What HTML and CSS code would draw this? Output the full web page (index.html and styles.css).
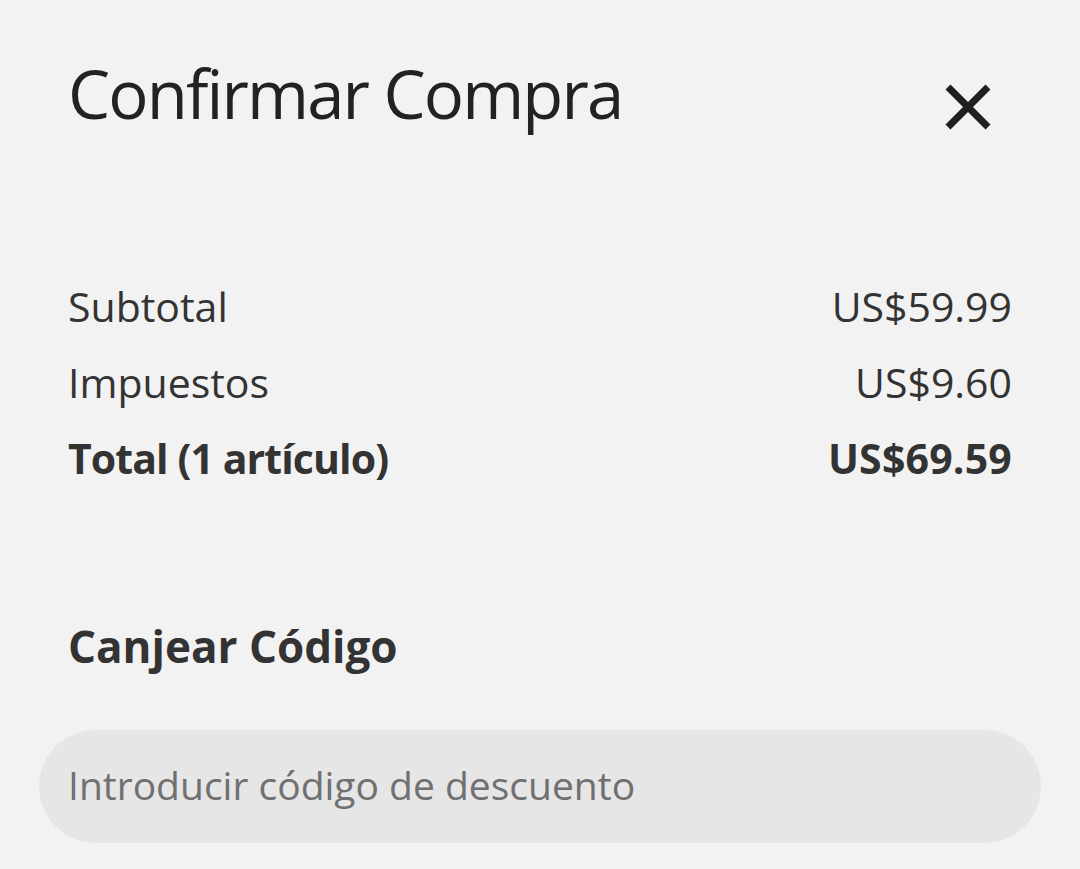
FILE: index.html
```html
<!DOCTYPE html>
<html lang="es">
<head>
<meta charset="utf-8">
<link rel="stylesheet" href="styles.css">
</head>
<body>
<div class="sheet">
  <header class="head">
    <h1 class="title">Confirmar Compra</h1>
    <button class="close" aria-label="Cerrar">
      <svg width="46" height="46" viewBox="0 0 46 46"><path d="M3 3 L43 43 M43 3 L3 43" stroke="#1f1f1f" stroke-width="7" fill="none"/></svg>
    </button>
  </header>
  <section class="summary">
    <div class="row"><span>Subtotal</span><span>US$59.99</span></div>
    <div class="row"><span>Impuestos</span><span>US$9.60</span></div>
    <div class="row total"><span class="label">Total (1 artículo)</span><span class="amount">US$69.59</span></div>
  </section>
  <section class="redeem">
    <h2 class="redeem-title">Canjear Código</h2>
    <div class="field"><span class="placeholder">Introducir código de descuento</span></div>
  </section>
</div>
</body>
</html>
```
FILE: styles.css
```css
html, body { margin: 0; padding: 0; }
body {
  background: #f2f2f2;
  font-family: "Open Sans", "Noto Sans", sans-serif;
  color: #333;
  width: 1080px;
  height: 869px;
  overflow: hidden;
}
.sheet { padding: 0 68px 0 68px; }
.head {
  display: flex;
  justify-content: space-between;
  align-items: flex-start;
  padding-top: 48px;
}
.title {
  margin: 0;
  font-weight: 400;
  font-size: 67px;
  line-height: 90px;
  color: #222;
  letter-spacing: -1.9px;
}
.close {
  background: none; border: 0; padding: 0;
  margin-top: 36px; margin-right: 21px;
  width: 46px; height: 46px;
}
.summary { margin-top: 130px; }
.row {
  display: flex;
  justify-content: space-between;
  font-size: 41px;
  line-height: 76px;
  color: #333;
}
.row.total { font-weight: 700; }
.row.total .label { letter-spacing: -0.9px; }
.row.total .amount { letter-spacing: 0.2px; }
.redeem { margin-top: 122px; }
.redeem-title {
  margin: 0;
  font-size: 44px;
  font-weight: 700;
  line-height: 56px;
  color: #333;
}
.field {
  margin: 56px -29px 0 -29px;
  height: 113px;
  border-radius: 57px;
  background: #e6e6e6;
  display: flex;
  align-items: center;
  padding-left: 29px;
}
.placeholder { font-size: 39px; color: #707070; line-height: 1; padding-bottom: 4px; }
```
